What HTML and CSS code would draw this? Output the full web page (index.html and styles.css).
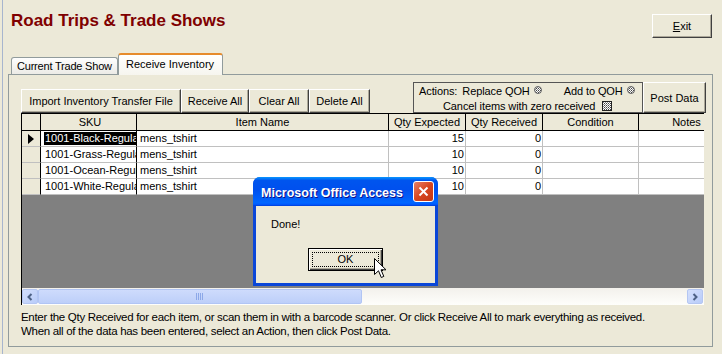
FILE: index.html
```html
<!DOCTYPE html>
<html lang="en">
<head>
    <meta charset="UTF-8">
    <title>Road Trips &amp; Trade Shows</title>
    <link rel="stylesheet" href="styles.css">
</head>
<body>
    <div class="app">
        <div class="top">
            <h1 class="title">Road Trips &amp; Trade Shows</h1>
            <button class="btn exit"><u>E</u>xit</button>
        </div>

        <div class="tabs">
            <div class="tab">Current Trade Show</div>
            <div class="tab active">Receive Inventory</div>
        </div>

        <div class="panel">
            <div class="toolbar">
                <div class="tool-group">
                    <button class="btn tool tool-import">Import Inventory Transfer File</button>
                    <button class="btn tool tool-receive">Receive All</button>
                    <button class="btn tool tool-clear">Clear All</button>
                    <button class="btn tool tool-delete">Delete All</button>
                </div>
                <div class="actions">
                    <div class="actions-line first">
                        <span>Actions:</span>
                        <span class="opt">Replace QOH</span>
                        <svg class="radio" width="8" height="8" viewBox="0 0 8 8">
                            <defs>
                                <pattern id="dots" width="2" height="2" patternUnits="userSpaceOnUse">
                                    <rect width="2" height="2" fill="#fff"/>
                                    <rect width="1" height="1" fill="#444"/>
                                    <rect x="1" y="1" width="1" height="1" fill="#888"/>
                                </pattern>
                            </defs>
                            <circle cx="4" cy="4" r="3.5" fill="url(#dots)" stroke="#666"/>
                        </svg>
                        <span class="opt add">Add to QOH</span>
                        <svg class="radio" width="8" height="8" viewBox="0 0 8 8">
                            <circle cx="4" cy="4" r="3.5" fill="url(#dots)" stroke="#666"/>
                        </svg>
                    </div>
                    <div class="actions-line second">
                        <span>Cancel items with zero received</span>
                        <svg class="check" width="10" height="10" viewBox="0 0 10 10">
                            <rect x="0.5" y="0.5" width="9" height="9" fill="url(#dots)" stroke="#222"/>
                        </svg>
                    </div>
                </div>
                <button class="btn post">Post Data</button>
            </div>

            <div class="grid">
                <div class="view">
                    <div class="row head">
                        <div class="cell sel"></div>
                        <div class="cell sku">SKU</div>
                        <div class="cell">Item Name</div>
                        <div class="cell">Qty Expected</div>
                        <div class="cell">Qty Received</div>
                        <div class="cell">Condition</div>
                        <div class="cell">Notes</div>
                    </div>
                    <div class="row">
                        <div class="cell sel">
                            <svg width="6" height="10" viewBox="0 0 6 10"><polygon points="0,0 6,5 0,10" fill="#000"/></svg>
                        </div>
                        <div class="cell sku"><span class="val picked">1001-Black-Regular</span></div>
                        <div class="cell">mens_tshirt</div>
                        <div class="cell num">15</div>
                        <div class="cell num">0</div>
                        <div class="cell"></div>
                        <div class="cell"></div>
                    </div>
                    <div class="row">
                        <div class="cell sel"></div>
                        <div class="cell sku"><span class="val">1001-Grass-Regular</span></div>
                        <div class="cell">mens_tshirt</div>
                        <div class="cell num">10</div>
                        <div class="cell num">0</div>
                        <div class="cell"></div>
                        <div class="cell"></div>
                    </div>
                    <div class="row">
                        <div class="cell sel"></div>
                        <div class="cell sku"><span class="val">1001-Ocean-Regular</span></div>
                        <div class="cell">mens_tshirt</div>
                        <div class="cell num">10</div>
                        <div class="cell num">0</div>
                        <div class="cell"></div>
                        <div class="cell"></div>
                    </div>
                    <div class="row">
                        <div class="cell sel"></div>
                        <div class="cell sku"><span class="val">1001-White-Regular</span></div>
                        <div class="cell">mens_tshirt</div>
                        <div class="cell num">10</div>
                        <div class="cell num">0</div>
                        <div class="cell"></div>
                        <div class="cell"></div>
                    </div>
                    <div class="empty"></div>
                </div>
                <div class="hscroll">
                    <div class="arrow">
                        <svg width="8" height="8" viewBox="0 0 8 8"><polyline points="5.5,1 2.5,4 5.5,7" fill="none" stroke="#4D6185" stroke-width="2"/></svg>
                    </div>
                    <div class="thumb">
                        <svg width="8" height="7" viewBox="0 0 8 7">
                            <line x1="0.5" y1="0" x2="0.5" y2="7" stroke="#8CA8E8"/>
                            <line x1="2.5" y1="0" x2="2.5" y2="7" stroke="#8CA8E8"/>
                            <line x1="4.5" y1="0" x2="4.5" y2="7" stroke="#8CA8E8"/>
                            <line x1="6.5" y1="0" x2="6.5" y2="7" stroke="#8CA8E8"/>
                        </svg>
                    </div>
                    <div class="track"></div>
                    <div class="arrow">
                        <svg width="8" height="8" viewBox="0 0 8 8"><polyline points="2.5,1 5.5,4 2.5,7" fill="none" stroke="#4D6185" stroke-width="2"/></svg>
                    </div>
                </div>
            </div>

            <p class="help">Enter the Qty Received for each item, or scan them in with a barcode scanner. Or click Receive All to mark everything as received.<br>When all of the data has been entered, select an Action, then click Post Data.</p>
        </div>

        <div class="dialog">
            <div class="titlebar">
                <span class="dialog-title">Microsoft Office Access</span>
                <div class="close">
                    <svg width="11" height="11" viewBox="0 0 11 11">
                        <line x1="1.5" y1="1.5" x2="9.5" y2="9.5" stroke="#fff" stroke-width="2"/>
                        <line x1="9.5" y1="1.5" x2="1.5" y2="9.5" stroke="#fff" stroke-width="2"/>
                    </svg>
                </div>
            </div>
            <div class="dialog-body">
                <div class="message">Done!</div>
                <button class="ok"><span>OK</span></button>
            </div>
        </div>

        <svg class="cursor" width="13" height="21" viewBox="0 0 13 21">
            <path d="M0.5 0.5 L0.5 16.5 L4.5 12.8 L7.3 19.5 L9.8 18.4 L7 11.8 L12 11.8 Z" fill="#fff" stroke="#000"/>
        </svg>
    </div>
</body>
</html>
```

FILE: styles.css
```css
body {
    margin: 0;
    background-color: #ECE9D8;
    font-family: "Liberation Sans", Arial, sans-serif;
    font-size: 11px;
    color: #000;
}

.app {
    position: relative;
    width: 719px;
    height: 354px;
    margin-left: 2px;
    border-left: 1px solid #A7B5CE;
    overflow: hidden;
}

.top {
    display: flex;
    justify-content: space-between;
    align-items: flex-start;
    height: 53px;
    padding: 11px 10px 0 8px;
    box-sizing: border-box;
}

.title {
    margin: 0;
    font-size: 17px;
    line-height: 20px;
    font-weight: bold;
    color: #800000;
}

.btn {
    font-family: inherit;
    font-size: 11px;
    color: #000;
    background-color: #ECE9D8;
    border: 1px solid;
    border-color: #fff #404040 #404040 #fff;
    box-shadow: inset -1px -1px #ACA899;
    padding: 0;
    box-sizing: border-box;
    white-space: nowrap;
}

.exit {
    width: 60px;
    height: 24px;
    margin-top: 3px;
}

/* tabs */
.tabs {
    display: flex;
    align-items: flex-end;
    height: 21px;
    padding-left: 8px;
}

.tab {
    height: 17px;
    line-height: 16px;
    padding: 0 0 0 5px;
    border: 1px solid #919B9C;
    border-bottom: none;
    border-radius: 3px 3px 0 0;
    background: linear-gradient(#FEFEFE, #ECEBE6);
    box-sizing: border-box;
    width: 107px;
    white-space: nowrap;
    letter-spacing: -0.2px;
}

.tab.active {
    position: relative;
    width: 105px;
    height: 22px;
    line-height: 18px;
    margin-bottom: -1px;
    padding-left: 7px;
    border-top: 2px solid #E68B2C;
    background: linear-gradient(#FFFFFF, #F6F5EF);
    letter-spacing: 0;
}

.panel {
    margin-left: 5px;
    width: 705px;
    height: 273px;
    border: 1px solid #919B9C;
    box-sizing: border-box;
    padding: 7px 5px 0 12px;
}

/* toolbar */
.toolbar {
    display: flex;
    align-items: flex-end;
    height: 31px;
}

.tool-group {
    display: flex;
}

.tool {
    height: 24px;
}

.tool-import { width: 160px; }
.tool-receive { width: 68px; }
.tool-clear { width: 60px; }
.tool-delete { width: 61px; }

.actions {
    width: 230px;
    height: 31px;
    margin-left: 43px;
    border: 1px solid #555;
    box-sizing: border-box;
    line-height: 15px;
    white-space: nowrap;
    letter-spacing: -0.1px;
}

.actions-line {
    display: flex;
    align-items: center;
    height: 14px;
    margin-top: 1px;
}

.actions-line span,
.actions-line svg {
    flex-shrink: 0;
}

.actions-line.first {
    padding-left: 5px;
}

.actions-line.second {
    padding-left: 29px;
}

.opt {
    margin-left: 5px;
}

.opt.add {
    margin-left: 22px;
}

.radio {
    margin-left: 4px;
    margin-top: -2px;
}

.check {
    margin-left: 7px;
}

.post {
    width: 63px;
    height: 31px;
}

/* datasheet */
.grid {
    width: 683px;
    height: 192px;
    border-left: 1px solid #000;
    border-top: 1px solid #000;
    box-sizing: border-box;
}

.view {
    overflow: hidden;
    width: 682px;
}

.row {
    display: grid;
    grid-template-columns: 19px 96px 252px 77px 77px 96px 96px;
    width: max-content;
}

.cell {
    height: 16px;
    line-height: 15px;
    padding: 0 3px;
    border-right: 1px solid #C0C0C0;
    border-bottom: 1px solid #C0C0C0;
    box-sizing: border-box;
    white-space: nowrap;
    overflow: hidden;
    background-color: #fff;
}

.cell.num {
    text-align: right;
    padding-right: 1px;
}

.cell.sku {
    border-right-color: #000;
    padding-right: 0;
}

.cell.sel {
    display: flex;
    align-items: center;
    justify-content: center;
    padding: 0;
    background-color: #ECE9D8;
    border-right-color: #000;
}

.head .cell {
    height: 17px;
    line-height: 16px;
    text-align: center;
    background-color: #ECE9D8;
    border-right-color: #000;
    border-bottom-color: #000;
}

.val {
    display: block;
    padding-left: 1px;
    height: 13px;
    line-height: 13px;
    margin-top: 1px;
    overflow: hidden;
}

.val.picked {
    background-color: #000;
    color: #fff;
}

.empty {
    height: 93px;
    background-color: #808080;
}

.hscroll {
    display: flex;
    height: 17px;
    padding: 1px 1px 1px 0;
    box-sizing: border-box;
    background: linear-gradient(#F3F1EC, #FEFEFB);
}

.arrow {
    width: 16px;
    height: 15px;
    display: flex;
    align-items: center;
    justify-content: center;
    background: linear-gradient(135deg, #D4DFFC, #B8CCF9);
    border: 1px solid #B4C6F2;
    border-radius: 2px;
    box-sizing: border-box;
}

.thumb {
    width: 324px;
    height: 15px;
    display: flex;
    align-items: center;
    justify-content: center;
    background: linear-gradient(#CEDBFC, #BDCFF9);
    border: 1px solid #B1C5F4;
    border-radius: 2px;
    box-sizing: border-box;
}

.track {
    flex: 1;
}

.help {
    margin: 5px 0 0;
    line-height: 14px;
    font-size: 11.5px;
    letter-spacing: -0.3px;
    white-space: nowrap;
}

/* message box */
.dialog {
    position: absolute;
    left: 250px;
    top: 177px;
    width: 185px;
    height: 109px;
    padding: 0 3px 3px;
    box-sizing: border-box;
    background-color: #0A46D8;
    border-radius: 7px 7px 0 0;
    display: flex;
    flex-direction: column;
}

.titlebar {
    height: 29px;
    margin: 0 -3px;
    padding: 0 4px 0 8px;
    display: flex;
    align-items: center;
    justify-content: space-between;
    border-radius: 7px 7px 0 0;
    background: linear-gradient(#0997FF 0%, #0055EE 12%, #0050EE 45%, #0066FF 88%, #005BFF 94%, #003DD7 100%);
}

.dialog-title {
    color: #fff;
    font-weight: bold;
    font-size: 12.5px;
    margin-top: 2px;
    text-shadow: 1px 1px #0F1089;
}

.close {
    width: 21px;
    height: 21px;
    box-sizing: border-box;
    border: 1px solid #fff;
    border-radius: 3px;
    background: linear-gradient(135deg, #E8806A, #D8461F 50%, #C33715);
    display: flex;
    align-items: center;
    justify-content: center;
}

.dialog-body {
    flex: 1;
    background-color: #ECE9D8;
    display: flex;
    flex-direction: column;
    padding-top: 11px;
}

.message {
    padding-left: 15px;
    line-height: 14px;
    font-size: 11px;
}

.ok {
    align-self: center;
    margin-top: 17px;
    width: 75px;
    height: 23px;
    padding: 0;
    border: 1px solid #000;
    background-color: #ECE9D8;
    box-shadow: inset 1px 1px #fff, inset -1px -1px #404040, inset -2px -2px #ACA899;
    font-family: inherit;
    font-size: 11px;
}

.ok span {
    display: block;
    margin: 3px;
    line-height: 13px;
    border: 1px dotted #000;
}

.cursor {
    position: absolute;
    left: 371px;
    top: 258px;
}
```
